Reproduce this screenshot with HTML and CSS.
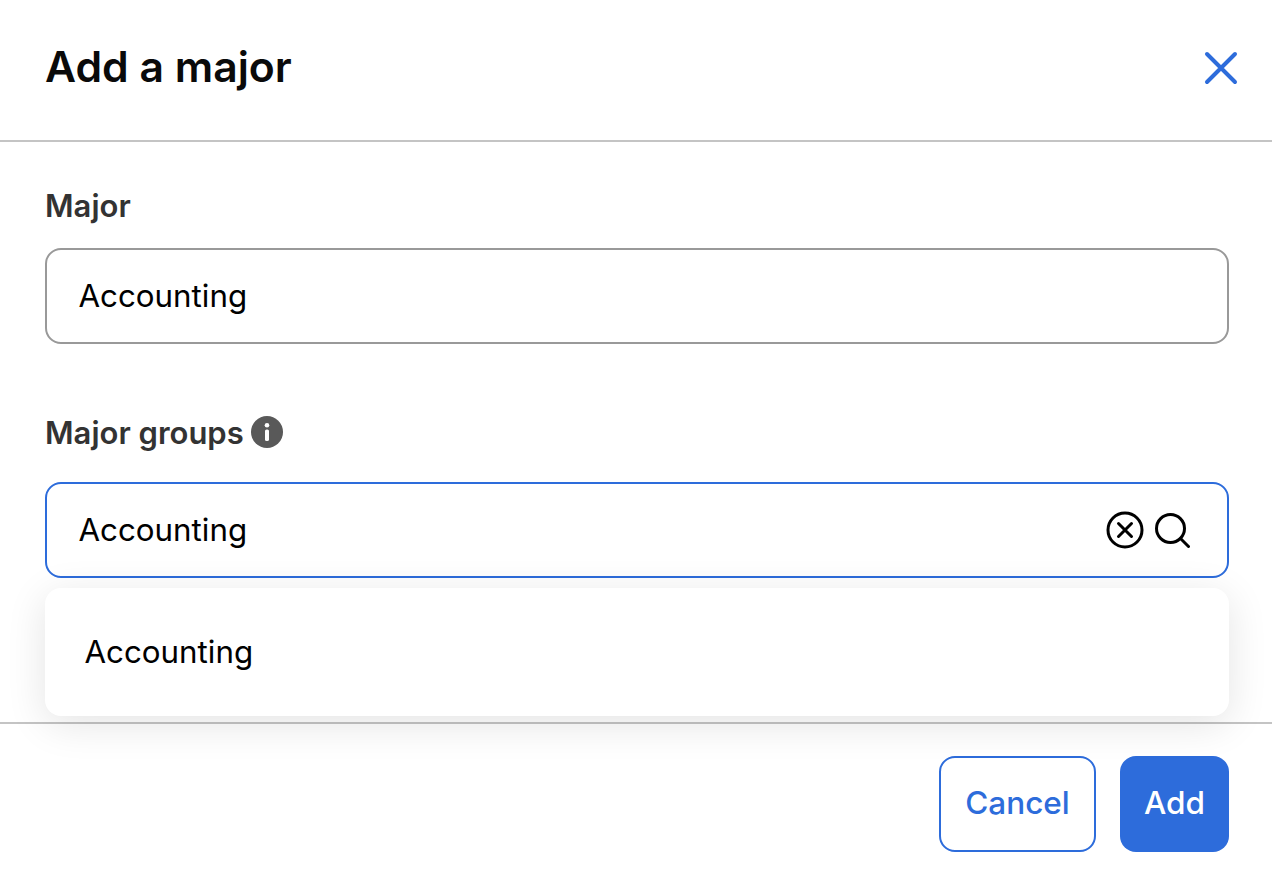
FILE: index.html
```html
<!DOCTYPE html>
<html lang="en">
<head>
<meta charset="UTF-8">
<title>Add a major</title>
<link rel="stylesheet" href="styles.css">
</head>
<body>
<div class="modal">
  <header class="modal-header">
    <h1>Add a major</h1>
    <button class="close-button" aria-label="Close">
      <svg width="34" height="34" viewBox="0 0 34 34" fill="none" stroke="#2d6cdb" stroke-width="4" stroke-linecap="round"><path d="M3 3l28 28M31 3L3 31"/></svg>
    </button>
  </header>
  <main class="modal-body">
    <div class="field">
      <label class="field-label">Major</label>
      <div class="input">Accounting</div>
    </div>
    <div class="field field-groups">
      <label class="field-label">Major groups
        <svg class="info-icon" width="32" height="32" viewBox="0 0 32 32"><circle cx="16" cy="16" r="16" fill="#595959"/><circle cx="16" cy="9.2" r="2.3" fill="#fff"/><rect x="14" y="13.5" width="4" height="11.5" rx="1.6" fill="#fff"/></svg>
      </label>
      <div class="input input-focus">
        <span>Accounting</span>
        <span class="input-icons">
          <svg width="38" height="38" viewBox="0 0 38 38" fill="none" stroke="#000" stroke-width="3" stroke-linecap="round"><circle cx="19" cy="19" r="17"/><path d="M12.5 12.5l13 13M25.500 12.500l-13 13"/></svg>
          <svg width="36" height="36" viewBox="0 0 36 36" fill="none" stroke="#000" stroke-width="3" stroke-linecap="round"><circle cx="16.500" cy="16.500" r="14"/><path d="M26.500 26.500l8 8"/></svg>
        </span>
      </div>
      <div class="dropdown">
        <div class="dropdown-item">Accounting</div>
      </div>
    </div>
  </main>
  <footer class="modal-footer">
    <button class="button outline">Cancel</button>
    <button class="button primary">Add</button>
  </footer>
</div>
</body>
</html>
```

FILE: styles.css
```css
* {
  box-sizing: border-box;
}

html,
body {
  margin: 0;
  height: 882px;
  overflow: hidden;
  background: #fff;
  font-family: "Inter", "Liberation Sans", sans-serif;
}

.modal-header {
  height: 142px;
  padding: 0 34px 8px 45px;
  display: flex;
  align-items: center;
  justify-content: space-between;
  border-bottom: 2px solid #c4c4c4;
}

.modal-header h1 {
  margin: 0;
  font-size: 42.700px;
  font-weight: 600;
  color: #0a0a0a;
}

.close-button {
  margin-top: 4px;
  padding: 0;
  border: 0;
  background: none;
  display: flex;
}

.modal-body {
  height: 580px;
  padding: 41px 43px 0 45px;
}

.field {
  position: relative;
}

.field-groups {
  margin-top: 66px;
}

.field-label {
  height: 44px;
  margin-bottom: 21px;
  display: flex;
  align-items: center;
  gap: 7px;
  font-size: 31px;
  font-weight: 600;
  color: #333;
}

.field-groups .field-label {
  margin-bottom: 28px;
}

.input {
  height: 96px;
  padding: 0 32px 0 31.500px;
  display: flex;
  align-items: center;
  justify-content: space-between;
  border: 2px solid #999;
  border-radius: 16px;
  background: #fff;
  font-size: 31.300px;
  color: #000;
}

.input-focus {
  border-color: #2d6cdb;
}

.input-icons {
  display: flex;
  align-items: center;
  gap: 10px;
  margin-right: 5px;
}

.dropdown {
  position: absolute;
  top: 178px;
  left: 0;
  right: 0;
  height: 128px;
  display: flex;
  align-items: center;
  padding: 0 39.500px;
  border-radius: 16px;
  background: #fff;
  box-shadow: 0 8px 40px rgba(0, 0, 0, 0.11);
  font-size: 31.300px;
  color: #000;
}

.modal-footer {
  height: 160px;
  padding: 32px 43px 0 0;
  display: flex;
  justify-content: flex-end;
  gap: 24px;
  border-top: 2px solid #c4c4c4;
}

.button {
  height: 96px;
  padding: 0 0 4px;
  border-radius: 16px;
  font-family: inherit;
  font-size: 31.500px;
  font-weight: 500;
}

.outline {
  width: 157px;
  border: 2px solid #2d6cdb;
  background: #fff;
  color: #2d6cdb;
}

.primary {
  width: 109px;
  border: 0;
  background: #2d6cdb;
  color: #fff;
}
```
